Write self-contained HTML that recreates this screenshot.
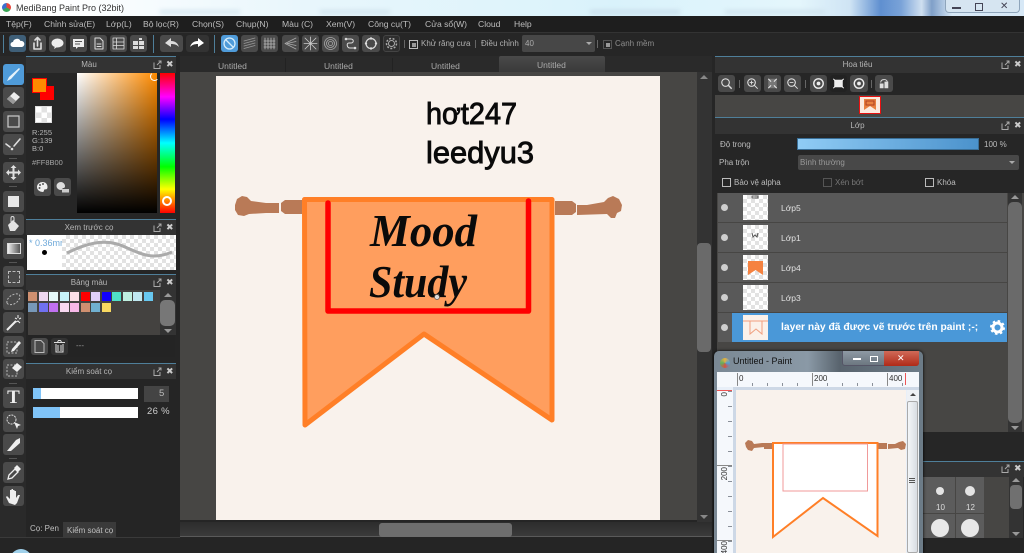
<!DOCTYPE html>
<html><head><meta charset="utf-8"><title>MediBang Paint Pro</title>
<style>
html,body{margin:0;padding:0;background:#252525}
#r{position:relative;width:1024px;height:553px;overflow:hidden;background:#252525;font-family:"Liberation Sans","DejaVu Sans",sans-serif;font-size:8px;color:#c4c4c4}
#r div,#r span,#r svg{position:absolute}
.t{white-space:nowrap;line-height:12px}
.m{top:18px;font-size:8.6px;color:#bdbdbd}
.b{background:#4a4a4a;border-radius:3px}
.b svg{left:0;top:0;width:100%;height:100%}
.h{background:#333;border-top:1px solid #4f7f9a;box-sizing:border-box;text-align:center;line-height:15px;color:#b5b5b5;font-size:8px;padding-right:24px}
.ck{background:repeating-conic-gradient(#e2e2e2 0 25%,#fff 0 50%) 0 0/8px 8px}
.sw{top:292px;width:9px;height:9px}
.sx{top:303px;width:9px;height:9px}
.l{left:718px;width:289px;height:29px;background:#595959}
.th{left:743px;width:25px;height:25px}
.dot{left:721px;width:7px;height:7px;border-radius:50%;background:#cfcfcf}
.ln{left:781px;color:#e0e0e0;font-size:8.5px}
.cb{width:7px;height:7px;border:1px solid #bbb}
.ic{fill:none;stroke:#ddd;stroke-width:1.6;stroke-linecap:round;stroke-linejoin:round}
.pop{width:9px;height:9px}
.x{font-weight:bold;color:#ccc;font-size:9px}
</style></head><body><div id="r">

<!-- title bar -->
<div style="left:0;top:0;width:1024px;height:16px;background:linear-gradient(90deg,#fdfdfd 0,#fff 5%,#e8f6fc 30%,#dff4fb 50%,#d9f2fb 60%,#e4f6fc 78%,#cfe4f4 83%,#5f8fd0 86%,#7aa3d8 88%,#cfdff0 90%,#7f9fc8 91%,#d7e8f6 93%,#d7e8f6 100%)"></div>
<div style="left:160px;top:10px;width:80px;height:4px;background:#d6e8f1;filter:blur(2px)"></div>
<div style="left:320px;top:10px;width:70px;height:4px;background:#d2e5ef;filter:blur(2px)"></div>
<div style="left:590px;top:10px;width:90px;height:4px;background:#c9deeb;filter:blur(2px)"></div>
<div style="left:725px;top:10px;width:100px;height:4px;background:#cfe3ee;filter:blur(2px)"></div>
<div style="left:2px;top:3px;width:9px;height:9px;border-radius:50%;background:conic-gradient(#e8443a 0 33%,#3aa655 0 66%,#3a6fd0 0)"></div>
<div class="t" style="left:16px;top:2px;font-size:9px;color:#333">MediBang Paint Pro (32bit)</div>
<div style="left:945px;top:0;width:75px;height:13px;background:#d6e5f1;border:1px solid #8fa5bb;border-top:0;border-radius:0 0 4px 4px;box-sizing:border-box"></div>
<div style="left:952px;top:7px;width:9px;height:2px;background:#445"></div>
<div style="left:975px;top:3px;width:6px;height:6px;border:1px solid #445"></div>
<div class="t" style="left:1000px;top:1px;color:#445;font-size:10px;font-weight:bold">✕</div>

<!-- menu -->
<div style="left:0;top:16px;width:1024px;height:16px;background:#1e1e1e"></div>
<div class="t m" style="left:6px">Tệp(F)</div>
<div class="t m" style="left:44px">Chỉnh sửa(E)</div>
<div class="t m" style="left:106px">Lớp(L)</div>
<div class="t m" style="left:143px">Bộ lọc(R)</div>
<div class="t m" style="left:192px">Chọn(S)</div>
<div class="t m" style="left:236px">Chụp(N)</div>
<div class="t m" style="left:282px">Màu (C)</div>
<div class="t m" style="left:326px">Xem(V)</div>
<div class="t m" style="left:368px">Công cụ(T)</div>
<div class="t m" style="left:425px">Cửa sổ(W)</div>
<div class="t m" style="left:478px">Cloud</div>
<div class="t m" style="left:514px">Help</div>

<!-- toolbar -->
<div style="left:0;top:32px;width:1024px;height:24px;background:#262626;border-top:1px solid #333;box-sizing:border-box"></div>
<div style="left:3px;top:35px;width:1px;height:18px;background:#4f7f9a"></div>
<div style="left:153px;top:35px;width:1px;height:18px;background:#4f7f9a"></div>
<div style="left:214px;top:35px;width:1px;height:18px;background:#4f7f9a"></div>
<div class="b" style="left:9px;top:35px;width:17px;height:17px;background:#3f5f78"><svg viewBox="0 0 17 17"><path d="M4 12a2.500 2.500 0 0 1 0-5 4 4 0 0 1 7.500-1A3 3 0 0 1 13 12z" fill="#fff"/></svg></div>
<div class="b" style="left:29px;top:35px;width:17px;height:17px"><svg viewBox="0 0 17 17"><path class="ic" stroke-width="1.200" d="M5 8v6h7V8M8.500 11V3M6 5l2.500-2.500L11 5"/></svg></div>
<div class="b" style="left:49px;top:35px;width:17px;height:17px"><svg viewBox="0 0 17 17"><ellipse cx="8.500" cy="8" rx="6" ry="4.500" fill="#eee"/><path d="M6 11l-1 3 4-2.500z" fill="#eee"/></svg></div>
<div class="b" style="left:70px;top:35px;width:17px;height:17px"><svg viewBox="0 0 17 17"><path d="M3 4h11v8H8l-2 2v-2H3z" fill="#eee"/><path d="M5 6.500h7M5 9h5" stroke="#555"/></svg></div>
<div class="b" style="left:90px;top:35px;width:17px;height:17px"><svg viewBox="0 0 17 17"><path class="ic" style="stroke-width:1" d="M5 3h5l3 3v8H5zM7 9h4M7 11.500h4"/></svg></div>
<div class="b" style="left:110px;top:35px;width:17px;height:17px"><svg viewBox="0 0 17 17"><path class="ic" style="stroke-width:.8" d="M3 3h11v11H3zM3 7h11M3 10.500h11M6.500 3v11"/></svg></div>
<div class="b" style="left:130px;top:35px;width:17px;height:17px"><svg viewBox="0 0 17 17"><path d="M3 6h5v4H3zM9 6h5v4H9zM3 11h5v3H3zM9 11h5v3H9zM9 3h3v2H9z" fill="#ddd"/></svg></div>
<div class="b" style="left:160px;top:35px;width:23px;height:17px"><svg viewBox="0 0 23 17"><path d="M5 8l6-5v3c5 0 7 3 8 6-2-2-4-3-8-3v3z" fill="#ddd"/></svg></div>
<div class="b" style="left:186px;top:35px;width:23px;height:17px;background:#333"><svg viewBox="0 0 23 17"><path d="M18 8l-6-5v3c-5 0-7 3-8 6 2-2 4-3 8-3v3z" fill="#fff"/></svg></div>
<div class="b" style="left:221px;top:35px;width:17px;height:17px;background:#4f9bd9"><svg viewBox="0 0 17 17"><circle cx="8.500" cy="8.500" r="5.500" fill="none" stroke="#d5ecfa" stroke-width="1.300"/><path d="M5 5l7 7" stroke="#d5ecfa" stroke-width="1.300"/></svg></div>
<div class="b" style="left:241px;top:35px;width:17px;height:17px"><svg viewBox="0 0 17 17"><path class="ic" style="stroke:#999;stroke-width:.8" d="M3 6l11-3M3 8.500l11-3M3 11l11-3M3 13.500l11-3"/></svg></div>
<div class="b" style="left:261px;top:35px;width:17px;height:17px"><svg viewBox="0 0 17 17"><path class="ic" style="stroke:#bbb;stroke-width:.8" d="M4 3v11M7 3v11M10 3v11M13 3v11M3 6h11M3 9h11M3 12h11"/></svg></div>
<div class="b" style="left:282px;top:35px;width:17px;height:17px"><svg viewBox="0 0 17 17"><path class="ic" style="stroke:#aaa;stroke-width:.8" d="M14 3L3 8.500 14 14M14 6.500L5 8.500l9 2"/></svg></div>
<div class="b" style="left:302px;top:35px;width:17px;height:17px"><svg viewBox="0 0 17 17"><path class="ic" style="stroke:#ccc;stroke-width:.8" d="M3 3l11 11M14 3L3 14M8.500 2v13M2 8.500h13"/></svg></div>
<div class="b" style="left:322px;top:35px;width:17px;height:17px"><svg viewBox="0 0 17 17"><g fill="none" stroke="#aaa" stroke-width=".8"><circle cx="8.500" cy="8.500" r="6"/><circle cx="8.500" cy="8.500" r="4"/><circle cx="8.500" cy="8.500" r="2"/></g></svg></div>
<div class="b" style="left:342px;top:35px;width:17px;height:17px"><svg viewBox="0 0 17 17"><path class="ic" style="stroke-width:1" d="M4 4h5c3 0 3 4 0 4H7c-3 0-2 5 1 5h5"/><circle cx="4" cy="4" r="1.300" fill="#ddd"/><circle cx="13" cy="13" r="1.300" fill="#ddd"/></svg></div>
<div class="b" style="left:362px;top:35px;width:18px;height:17px"><svg viewBox="0 0 18 17"><circle cx="9" cy="8.500" r="5" fill="none" stroke="#ddd" stroke-width="1.200"/><g fill="#ddd"><circle cx="9" cy="3.500" r="1.200"/><circle cx="9" cy="13.500" r="1.200"/><circle cx="4" cy="8.500" r="1.200"/><circle cx="14" cy="8.500" r="1.200"/></g></svg></div>
<div class="b" style="left:383px;top:35px;width:17px;height:17px;background:#2e2e2e;border:1px solid #444;box-sizing:border-box"><svg viewBox="0 0 15 15"><circle cx="7.500" cy="7.500" r="3" fill="none" stroke="#aaa"/><circle cx="7.500" cy="7.500" r="5" fill="none" stroke="#aaa" stroke-width="1.500" stroke-dasharray="2 1.500"/></svg></div>
<div style="left:404px;top:40px;width:1px;height:8px;background:#666"></div>
<div class="cb" style="left:409px;top:40px;background:linear-gradient(#999,#999) center/4px 4px no-repeat"></div>
<div class="t" style="left:421px;top:38px;color:#b0b0b0">Khử răng cưa</div>
<div style="left:475px;top:40px;width:1px;height:8px;background:#666"></div>
<div class="t" style="left:481px;top:38px;color:#b0b0b0">Điều chỉnh</div>
<div style="left:522px;top:35px;width:73px;height:17px;background:#474747;border-radius:2px"></div>
<div class="t" style="left:525px;top:38px;color:#aaa;font-size:8px">40</div>
<div style="left:586px;top:42px;width:0;height:0;border:3px solid transparent;border-top-color:#aaa"></div>
<div style="left:597px;top:40px;width:1px;height:8px;background:#666"></div>
<div class="cb" style="left:603px;top:40px;border-color:#555;background:linear-gradient(#999,#999) center/4px 4px no-repeat"></div>
<div class="t" style="left:615px;top:38px;color:#8d8d8d">Cạnh mềm</div>

<!-- left tools -->
<div style="left:0;top:56px;width:26px;height:481px;background:#2a2a2a"></div>
<div class="b" style="left:3px;top:64px;width:21px;height:21px;background:#4f9bd9"><svg viewBox="0 0 21 21"><path d="M4 17l2-4L16 4l1 1-9 10z" fill="#e6f3fb"/></svg></div>
<div class="b" style="left:3px;top:87px;width:21px;height:21px"><svg viewBox="0 0 21 21"><path d="M4 12l7-7 6 5-7 7z" fill="#eee"/><path d="M4 12l3-3 6 5-3 3z" fill="#999"/></svg></div>
<div class="b" style="left:3px;top:111px;width:21px;height:21px"><svg viewBox="0 0 21 21"><rect x="5" y="5" width="11" height="11" fill="none" stroke="#ccc" stroke-width="1.200"/></svg></div>
<div class="b" style="left:3px;top:134px;width:21px;height:21px"><svg viewBox="0 0 21 21"><path class="ic" d="M3 10l4 3M11 12l6-7"/><circle cx="9" cy="15" r="1.300" fill="#ddd"/></svg></div>
<div style="left:9px;top:158px;width:8px;height:1px;background:#555"></div>
<div class="b" style="left:3px;top:162px;width:21px;height:21px"><svg viewBox="0 0 21 21"><path d="M10.500 3l3 3h-2v3.500H15v-2l3 3-3 3v-2h-3.500V15h2l-3 3-3-3h2v-3.500H6v2l-3-3 3-3v2h3.500V6h-2z" fill="#e0e0e0"/></svg></div>
<div style="left:9px;top:186px;width:8px;height:1px;background:#555"></div>
<div class="b" style="left:3px;top:191px;width:21px;height:21px"><div style="left:5px;top:5px;width:11px;height:11px;background:#e8e8e8"></div></div>
<div class="b" style="left:3px;top:214px;width:21px;height:21px"><svg viewBox="0 0 21 21"><path d="M5 11l5-5 6 6-4 5H7z" fill="#e4e4e4"/><path d="M8 8V4a1.500 1.500 0 0 1 3 0v3" fill="none" stroke="#ddd"/></svg></div>
<div class="b" style="left:3px;top:238px;width:21px;height:21px"><div style="left:4px;top:5px;width:14px;height:11px;background:linear-gradient(90deg,#eee,#555);border:1px solid #ddd;box-sizing:border-box"></div></div>
<div style="left:9px;top:262px;width:8px;height:1px;background:#555"></div>
<div class="b" style="left:3px;top:266px;width:21px;height:21px"><div style="left:5px;top:5px;width:10px;height:10px;border:1px dashed #bbb"></div></div>
<div class="b" style="left:3px;top:289px;width:21px;height:21px"><svg viewBox="0 0 21 21"><path d="M4 14c-1-5 6-10 11-9 4 1 1 8-4 10-3 1-6 1-7-1z" fill="none" stroke="#bbb" stroke-dasharray="2 1.500"/></svg></div>
<div class="b" style="left:3px;top:312px;width:21px;height:21px"><svg viewBox="0 0 21 21"><path d="M4 18L13 9" stroke="#eee" stroke-width="2"/><path d="M15 3v3M12 6l2 1M18 6l-2 1M13 10l2-1 2 2" stroke="#eee" fill="none"/></svg></div>
<div class="b" style="left:3px;top:336px;width:21px;height:21px"><svg viewBox="0 0 21 21"><rect x="4" y="6" width="10" height="11" fill="none" stroke="#bbb" stroke-dasharray="2 1.500"/><path d="M9 13l7-8 2 2-7 8-3 1z" fill="#eee"/></svg></div>
<div class="b" style="left:3px;top:359px;width:21px;height:20px"><svg viewBox="0 0 21 20"><rect x="4" y="6" width="10" height="11" fill="none" stroke="#bbb" stroke-dasharray="2 1.500"/><path d="M9 9l5-5 5 4-5 5z" fill="#eee"/></svg></div>
<div style="left:9px;top:383px;width:8px;height:1px;background:#555"></div>
<div class="b t" style="left:3px;top:387px;width:21px;height:21px;text-align:center;font:bold 19px/21px 'Liberation Serif',serif;color:#eee">T</div>
<div class="b" style="left:3px;top:411px;width:21px;height:21px"><svg viewBox="0 0 21 21"><circle cx="8.500" cy="8.500" r="4.500" fill="none" stroke="#ddd" stroke-dasharray="2 1"/><path d="M11 11l7 3-3 1-1 3z" fill="#eee"/></svg></div>
<div class="b" style="left:3px;top:434px;width:21px;height:21px"><svg viewBox="0 0 21 21"><path d="M4 17l9-11 4-2 0 5-9 8z" fill="#eee"/></svg></div>
<div style="left:9px;top:458px;width:8px;height:1px;background:#555"></div>
<div class="b" style="left:3px;top:462px;width:21px;height:21px"><svg viewBox="0 0 21 21"><path d="M5 17l1-4 6-6 3 3-6 6z" fill="none" stroke="#eee" stroke-width="1.300"/><path d="M11 6l3-3 4 4-3 3z" fill="#eee"/></svg></div>
<div class="b" style="left:3px;top:486px;width:21px;height:20px"><svg viewBox="0 0 21 20"><path d="M6 17l-3-6 1-1 3 3V4h1.500v6-7H10v7-6h1.500v6-5H13v7l2-3h2l-3 8-2 2z" fill="#eee"/></svg></div>

<!-- colour panel -->
<div style="left:26px;top:56px;width:150px;height:163px;background:#262626"></div>
<div class="h" style="left:26px;top:56px;width:150px;height:17px">Màu</div>
<svg class="pop" style="left:153px;top:60px"><path d="M1 2.500v6h6V5M4 5l4-4M5.500 1H8v2.500" fill="none" stroke="#aaa"/></svg><div class="t x" style="left:166px;top:58px">✖</div>
<div style="left:40px;top:86px;width:14px;height:14px;background:#f00"></div>
<div style="left:32px;top:78px;width:15px;height:15px;background:#ff8b00;border:1px solid #f00;box-sizing:border-box"></div>
<div class="ck" style="left:35px;top:106px;width:17px;height:17px;background-size:11px 11px;border:1px solid #ddd;box-sizing:border-box"></div>
<div class="t" style="left:32px;top:129px;font-size:7.500px;line-height:8px;color:#b5b5b5;white-space:pre">R:255
G:139
B:0</div>
<div class="t" style="left:32px;top:157px;font-size:7.500px;color:#a5a5a5">#FF8B00</div>
<div class="b" style="left:34px;top:178px;width:17px;height:18px"><svg viewBox="0 0 17 18"><path d="M8.500 4a5.500 5 0 1 0 0 10c2 0 1-2 2-2.500s3 .5 3-2.500c0-3-2-5-5-5z" fill="#eee"/><g fill="#555"><circle cx="6" cy="7" r="1"/><circle cx="9" cy="6" r="1"/><circle cx="5.500" cy="10" r="1"/></g></svg></div>
<div class="b" style="left:54px;top:178px;width:17px;height:18px"><svg viewBox="0 0 17 18"><path d="M7 4a4.500 4 0 1 0 0 8c2 0 1-2 2-2s2 0 2-2c0-2-2-4-4-4z" fill="#ddd"/><rect x="8" y="11" width="7" height="3.500" fill="#ccc"/></svg></div>
<div style="left:77px;top:73px;width:80px;height:140px;background:linear-gradient(#0000,#000),linear-gradient(90deg,#fff,#ff8b00)"></div>
<div style="left:150px;top:72px;width:7px;height:7px;border:1.500px solid #fff;border-radius:50%;border-top-color:transparent;border-right-color:transparent"></div>
<div style="left:160px;top:73px;width:15px;height:140px;background:linear-gradient(#f00 0,#f0f 17%,#00f 33%,#0ff 50%,#0f0 67%,#ff0 83%,#f00 100%)"></div>
<div style="left:162px;top:196px;width:6px;height:6px;border:2px solid #fff;border-radius:50%"></div>

<!-- preview -->
<div class="h" style="left:26px;top:219px;width:150px;height:16px;line-height:15px">Xem trước cọ</div>
<svg class="pop" style="left:153px;top:223px"><path d="M1 2.500v6h6V5M4 5l4-4M5.500 1H8v2.500" fill="none" stroke="#aaa"/></svg><div class="t x" style="left:166px;top:221px">✖</div>
<div style="left:27px;top:235px;width:35px;height:35px;background:#fff;overflow:hidden"></div>
<div class="t" style="left:29px;top:237px;font-size:9px;color:#6fa9d9;width:33px;overflow:hidden">* 0.36mm</div>
<div style="left:42px;top:250px;width:5px;height:5px;border-radius:50%;background:#000"></div>
<div class="ck" style="left:62px;top:235px;width:114px;height:35px;background-size:8px 8px"></div>
<svg style="left:62px;top:235px" width="114" height="35"><path d="M5 18C25 8 40 5 55 9S85 28 110 17" fill="none" stroke="#aaa" stroke-width="3"/></svg>

<!-- palette -->
<div class="h" style="left:26px;top:274px;width:150px;height:16px">Bảng màu</div>
<svg class="pop" style="left:153px;top:278px"><path d="M1 2.500v6h6V5M4 5l4-4M5.500 1H8v2.500" fill="none" stroke="#aaa"/></svg><div class="t x" style="left:166px;top:276px">✖</div>
<div style="left:28px;top:290px;width:132px;height:45px;background:#444240"></div>
<div class="sw" style="left:28px;background:#d09070"></div><div class="sw" style="left:39px;background:#f0d8f0"></div><div class="sw" style="left:49px;background:#e8fafa"></div><div class="sw" style="left:60px;background:#c8f4fa"></div><div class="sw" style="left:70px;background:#fde0e8"></div><div class="sw" style="left:81px;background:#f00"></div><div class="sw" style="left:91px;background:#e0d0f8"></div><div class="sw" style="left:102px;background:#10f"></div><div class="sw" style="left:112px;background:#50e0c8"></div><div class="sw" style="left:123px;background:#c0f0e0"></div><div class="sw" style="left:133px;background:#c0e8f0"></div><div class="sw" style="left:144px;background:#68c8f0"></div>
<div class="sx" style="left:28px;background:#7898b8"></div><div class="sx" style="left:39px;background:#7070f0"></div><div class="sx" style="left:49px;background:#c070f0"></div><div class="sx" style="left:60px;background:#f8d8f0"></div><div class="sx" style="left:70px;background:#f8b8e8"></div><div class="sx" style="left:81px;background:#d09070"></div><div class="sx" style="left:91px;background:#70b0d0"></div><div class="sx" style="left:102px;background:#f8d860"></div>
<div style="left:160px;top:290px;width:16px;height:45px;background:#333"></div>
<div style="left:160px;top:300px;width:15px;height:26px;background:#777;border-radius:5px"></div>
<div style="left:164px;top:293px;width:0;height:0;border:4px solid transparent;border-bottom-color:#999;border-top:0"></div>
<div style="left:164px;top:329px;width:0;height:0;border:4px solid transparent;border-top-color:#999;border-bottom:0"></div>
<div style="left:28px;top:335px;width:147px;height:22px;background:#242424"></div>
<div class="b" style="left:31px;top:338px;width:17px;height:17px"><svg viewBox="0 0 17 17"><path d="M4 2.500h6l3 3v9H4z" fill="none" stroke="#bbb"/></svg></div>
<div class="b" style="left:51px;top:338px;width:17px;height:17px;background:#333"><svg viewBox="0 0 17 17"><path d="M3 4.500h11M5 6v8h7V6M7 7v6M10 7v6M6.500 4l1-1.500h2l1 1.500" fill="none" stroke="#ddd"/></svg></div>
<div class="t" style="left:76px;top:340px;color:#999">---</div>

<!-- brush control -->
<div class="h" style="left:26px;top:363px;width:150px;height:16px">Kiểm soát cọ</div>
<svg class="pop" style="left:153px;top:367px"><path d="M1 2.500v6h6V5M4 5l4-4M5.500 1H8v2.500" fill="none" stroke="#aaa"/></svg><div class="t x" style="left:166px;top:365px">✖</div>
<div style="left:33px;top:388px;width:105px;height:11px;background:linear-gradient(90deg,#80c4f8 8px,#fff 8px)"></div>
<div style="left:144px;top:386px;width:25px;height:16px;background:#444"></div>
<div class="t" style="left:159px;top:388px;color:#bbb;font-size:9.500px">5</div>
<div style="left:33px;top:407px;width:105px;height:11px;background:linear-gradient(90deg,#80c4f8 27px,#fff 27px)"></div>
<div class="t" style="left:147px;top:406px;color:#ccc;font-size:9.500px;letter-spacing:.3px">26 %</div>
<div class="t" style="left:30px;top:523px;color:#c0c0c0">Cọ: Pen</div>
<div style="left:63px;top:522px;width:53px;height:15px;background:#3a3a3a"></div>
<div class="t" style="left:67px;top:525px;color:#c0c0c0">Kiểm soát cọ</div>
<div style="left:0;top:537px;width:180px;height:1px;background:#3a3a3a"></div>
<div style="left:10px;top:549px;width:22px;height:22px;border-radius:50%;background:#9fd0ea"></div>

<!-- canvas area -->
<div style="left:180px;top:56px;width:532px;height:16px;background:#2a2a2a"></div>
<div class="t" style="left:218px;top:60px;color:#aaa;font-size:8.500px">Untitled</div>
<div class="t" style="left:324px;top:60px;color:#aaa;font-size:8.500px">Untitled</div>
<div class="t" style="left:431px;top:60px;color:#aaa;font-size:8.500px">Untitled</div>
<div style="left:285px;top:58px;width:1px;height:14px;background:#222"></div>
<div style="left:392px;top:58px;width:1px;height:14px;background:#222"></div>
<div style="left:499px;top:56px;width:106px;height:16px;background:linear-gradient(#4a4a4a,#3a3a3a);border-radius:2px 2px 0 0"></div>
<div class="t" style="left:537px;top:59px;color:#aaa;font-size:8.500px">Untitled</div>
<div style="left:180px;top:72px;width:532px;height:448px;background:#474644"></div>
<div style="left:216px;top:76px;width:444px;height:444px;background:#f9f2ec"></div>
<div style="left:697px;top:72px;width:15px;height:465px;background:#333"></div>
<div style="left:697px;top:243px;width:14px;height:109px;background:#6a6a6a;border-radius:4px"></div>
<div style="left:700px;top:75px;width:0;height:0;border:4px solid transparent;border-bottom-color:#888;border-top:0"></div>
<div style="left:700px;top:515px;width:0;height:0;border:4px solid transparent;border-top-color:#888;border-bottom:0"></div>
<div style="left:180px;top:522px;width:532px;height:15px;background:linear-gradient(#2c2c2c,#3a3a3a);border-bottom:1px solid #5a5a5a;box-sizing:border-box"></div>
<div style="left:379px;top:523px;width:133px;height:14px;background:#6e6e6e;border-radius:3px"></div>

<!-- artwork -->
<svg style="left:216px;top:76px" width="444" height="444" viewBox="216 76 444 444">
<path d="M235 205l2-6 5-3 5 1 4 4 15 2h13v10h-13l-17 1-5 2-6-1-3-5zM281 203l4-3h17v14h-17l-4-3zM555 201h17l4 3v8l-4 3h-17zM577 205h10l17-3 4-4 5-2 6 3 3 6-1 6-4 2-2 5-4 0-4-4-30 1z" fill="#b97a57"/>
<path d="M304.500 199.500H552V420L424 334 305 425z" fill="#ff9e5e" stroke="#ff7f27" stroke-width="5" stroke-linejoin="round"/>
<path d="M328 203V311H528.500V201" fill="none" stroke="#f00" stroke-width="5.500" stroke-linejoin="round" stroke-linecap="round"/>
<text x="370" y="246" font-family="Liberation Serif,serif" font-style="italic" font-weight="bold" font-size="46" textLength="107" lengthAdjust="spacingAndGlyphs" fill="#0a0a0a">Mood</text>
<text x="369" y="297" font-family="Liberation Serif,serif" font-style="italic" font-weight="bold" font-size="46" textLength="98" lengthAdjust="spacingAndGlyphs" fill="#0a0a0a">Study</text>
<circle cx="437" cy="297" r="2.500" fill="#ddd" stroke="#555" stroke-width=".7"/>
<text x="426" y="124" font-family="Liberation Sans,sans-serif" font-size="31" textLength="91" lengthAdjust="spacingAndGlyphs" fill="#0a0a0a" stroke="#0a0a0a" stroke-width=".9">hơt247</text>
<text x="426" y="163" font-family="Liberation Sans,sans-serif" font-size="31" textLength="108" lengthAdjust="spacingAndGlyphs" fill="#0a0a0a" stroke="#0a0a0a" stroke-width=".9">leedyu3</text>
</svg>

<!-- right: navigator -->
<div style="left:712px;top:56px;width:312px;height:481px;background:#262626"></div>
<div class="h" style="left:715px;top:56px;width:309px;height:17px">Hoa tiêu</div>
<svg class="pop" style="left:1001px;top:60px"><path d="M1 2.500v6h6V5M4 5l4-4M5.500 1H8v2.500" fill="none" stroke="#aaa"/></svg><div class="t x" style="left:1014px;top:58px">✖</div>
<div class="b" style="left:718px;top:75px;width:17px;height:17px"><svg viewBox="0 0 17 18"><circle cx="7.500" cy="8" r="4" fill="none" stroke="#ddd" stroke-width="1.200"/><path d="M10.500 11l3.500 3.500" stroke="#ddd" stroke-width="1.500"/></svg></div>
<div style="left:739px;top:80px;width:1px;height:8px;background:#666"></div>
<div class="b" style="left:744px;top:75px;width:17px;height:17px"><svg viewBox="0 0 17 18"><circle cx="7.500" cy="8" r="4" fill="none" stroke="#ddd" stroke-width="1.200"/><path d="M10.500 11l3.500 3.500M5.500 8h4M7.500 6v4" stroke="#ddd"/></svg></div>
<div class="b" style="left:764px;top:75px;width:17px;height:17px"><svg viewBox="0 0 17 18"><path d="M4 4h9v10H4z" fill="#777"/><path d="M4 4l3 3M13 4l-3 3M4 14l3-3M13 14l-3-3" stroke="#eee"/></svg></div>
<div class="b" style="left:784px;top:75px;width:17px;height:17px"><svg viewBox="0 0 17 18"><circle cx="7.500" cy="8" r="4" fill="none" stroke="#ddd" stroke-width="1.200"/><path d="M10.500 11l3.500 3.500M5.500 8h4" stroke="#ddd"/></svg></div>
<div style="left:805px;top:80px;width:1px;height:8px;background:#666"></div>
<div class="b" style="left:810px;top:75px;width:17px;height:17px"><svg viewBox="0 0 17 18"><circle cx="8.500" cy="9" r="5" fill="none" stroke="#eee" stroke-width="1.500"/><circle cx="8.500" cy="9" r="2" fill="#eee"/></svg></div>
<div class="b" style="left:830px;top:75px;width:17px;height:17px;background:#222"><svg viewBox="0 0 17 18"><rect x="4" y="5" width="9" height="8" fill="#eee"/><path d="M3 4l2 2M14 4l-2 2M3 14l2-2M14 14l-2-2" stroke="#fff"/></svg></div>
<div class="b" style="left:850px;top:75px;width:18px;height:17px"><svg viewBox="0 0 17 18"><circle cx="8.500" cy="9" r="5" fill="none" stroke="#eee" stroke-width="1.500"/><circle cx="8.500" cy="9" r="2" fill="#eee"/></svg></div>
<div style="left:871px;top:80px;width:1px;height:8px;background:#666"></div>
<div class="b" style="left:875px;top:75px;width:18px;height:17px"><svg viewBox="0 0 17 18"><path d="M4 9h4v5H4zM9 7h4v7H9z" fill="#ddd"/><path d="M5 8c0-4 6-4 7-1" fill="none" stroke="#ddd"/></svg></div>
<div style="left:715px;top:95px;width:309px;height:22px;background:#474644"></div>
<div style="left:859px;top:96px;width:22px;height:18px;background:#fbeadf;border:1.500px solid #e81010;box-sizing:border-box"></div>
<svg style="left:863px;top:98px" width="14" height="13"><path d="M1 1h12v11L7 8 1 12z" fill="#e88040"/><rect x="3" y="3" width="8" height="4" fill="none" stroke="#b04020"/></svg>

<!-- layers -->
<div class="h" style="left:715px;top:117px;width:309px;height:17px">Lớp</div>
<svg class="pop" style="left:1001px;top:121px"><path d="M1 2.500v6h6V5M4 5l4-4M5.500 1H8v2.500" fill="none" stroke="#aaa"/></svg><div class="t x" style="left:1014px;top:119px">✖</div>
<div class="t" style="left:720px;top:139px;color:#bbb">Độ trong</div>
<div style="left:797px;top:138px;width:182px;height:12px;background:linear-gradient(90deg,#90ccf5,#4b92cc);border:1px solid #3a6f98;box-sizing:border-box"></div>
<div class="t" style="left:984px;top:139px;color:#bbb">100 %</div>
<div class="t" style="left:719px;top:157px;color:#bbb">Pha trộn</div>
<div style="left:798px;top:155px;width:221px;height:15px;background:#484848;border-radius:2px"></div>
<div class="t" style="left:800px;top:157px;color:#999;font-size:8px">Bình thường</div>
<div style="left:1009px;top:161px;width:0;height:0;border:3px solid transparent;border-top-color:#aaa"></div>
<div class="cb" style="left:722px;top:178px"></div><div class="t" style="left:734px;top:177px;color:#bbb">Bảo vệ alpha</div>
<div class="cb" style="left:823px;top:178px;border-color:#555"></div><div class="t" style="left:835px;top:177px;color:#777">Xén bớt</div>
<div class="cb" style="left:925px;top:178px"></div><div class="t" style="left:937px;top:177px;color:#bbb">Khóa</div>
<div style="left:717px;top:193px;width:307px;height:239px;background:#474644"></div>
<div style="left:715px;top:432px;width:309px;height:29px;background:#262626"></div>

<div class="l" style="top:193px"></div><div class="dot" style="top:204px"></div><div class="ck th" style="top:195px"></div><div class="t ln" style="top:202px">Lớp5</div>
<div class="l" style="top:223px"></div><div class="dot" style="top:234px"></div><div class="ck th" style="top:225px"></div><div class="t ln" style="top:232px">Lớp1</div>
<svg style="left:751px;top:232px" width="8" height="6"><path d="M1 1l1 4 2-2 2 2 1-4" fill="none" stroke="#555"/></svg>
<svg style="left:751px;top:195px" width="8" height="4"><path d="M1 1h6v2H1z" fill="none" stroke="#555"/></svg>
<div class="l" style="top:253px"></div><div class="dot" style="top:264px"></div><div class="ck th" style="top:255px"></div><div class="t ln" style="top:262px">Lớp4</div>
<svg style="left:748px;top:261px" width="15" height="15"><path d="M0 0h15v14L7.500 9 0 14z" fill="#f58240"/></svg>
<div class="l" style="top:283px"></div><div class="dot" style="top:294px"></div><div class="ck th" style="top:285px"></div><div class="t ln" style="top:292px">Lớp3</div>
<div class="l" style="top:313px;width:14px;height:29px"></div><div class="dot" style="top:324px"></div>
<div style="left:732px;top:313px;width:275px;height:29px;background:#4a98d8"></div>
<div style="left:743px;top:315px;width:25px;height:25px;background:#fbf1ea"></div>
<svg style="left:743px;top:315px" width="25" height="25"><path d="M0 6h25M7 6v13l6-5 6 5V6" fill="none" stroke="#f0a080"/></svg>
<div class="t" style="left:781px;top:322px;font-weight:bold;color:#fff;font-size:10.300px">layer này đã được vẽ trước trên paint ;-;</div>
<svg style="left:990px;top:320px" width="15" height="15" viewBox="0 0 15 15"><circle cx="7.500" cy="7.500" r="4.500" fill="none" stroke="#fff" stroke-width="3"/><circle cx="7.500" cy="7.500" r="6.500" fill="none" stroke="#fff" stroke-width="2" stroke-dasharray="2.500 2.600"/></svg>
<div style="left:1008px;top:193px;width:14px;height:239px;background:#333"></div>
<div style="left:1008px;top:202px;width:14px;height:221px;background:#6a6a6a;border-radius:5px"></div>
<div style="left:1011px;top:195px;width:0;height:0;border:4px solid transparent;border-bottom-color:#999;border-top:0"></div>
<div style="left:1011px;top:426px;width:0;height:0;border:4px solid transparent;border-top-color:#999;border-bottom:0"></div>

<!-- brush panel -->
<div class="h" style="left:715px;top:461px;width:309px;height:16px"></div>
<svg class="pop" style="left:1001px;top:464px"><path d="M1 2.500v6h6V5M4 5l4-4M5.500 1H8v2.500" fill="none" stroke="#aaa"/></svg><div class="t x" style="left:1014px;top:462px">✖</div>
<div style="left:923px;top:477px;width:86px;height:61px;background:#474644"></div>
<div style="left:923px;top:477px;width:32px;height:36px;background:#5c5c5c"></div>
<div style="left:956px;top:477px;width:28px;height:36px;background:#5c5c5c"></div>
<div style="left:923px;top:514px;width:32px;height:24px;background:#5c5c5c"></div>
<div style="left:956px;top:514px;width:28px;height:24px;background:#5c5c5c"></div>
<div style="left:936px;top:487px;width:8px;height:8px;border-radius:50%;background:#e4e4e4"></div>
<div style="left:965px;top:486px;width:10px;height:10px;border-radius:50%;background:#e4e4e4"></div>
<div class="t" style="left:936px;top:502px;color:#ddd;font-size:8px">10</div>
<div class="t" style="left:966px;top:502px;color:#ddd;font-size:8px">12</div>
<div style="left:931px;top:519px;width:18px;height:18px;border-radius:50%;background:#e8e8e8"></div>
<div style="left:961px;top:519px;width:18px;height:18px;border-radius:50%;background:#e8e8e8"></div>
<div style="left:1009px;top:477px;width:14px;height:61px;background:#333"></div>
<div style="left:1010px;top:485px;width:12px;height:24px;background:#707070;border-radius:4px"></div>
<div style="left:1012px;top:478px;width:0;height:0;border:4px solid transparent;border-bottom-color:#999;border-top:0"></div>
<div style="left:1012px;top:532px;width:0;height:0;border:4px solid transparent;border-top-color:#999;border-bottom:0"></div>

<!-- paint window -->
<div style="left:714px;top:351px;width:209px;height:210px;background:linear-gradient(90deg,#7a8894,#8a99a6 45%,#59646e 60%,#6d7c88);border-radius:5px 5px 0 0;box-shadow:0 0 3px #000"></div>
<div style="left:720px;top:358px;width:10px;height:10px;border-radius:50%;background:conic-gradient(#e8b040,#50a0d8,#d85040,#60b060,#e8b040)"></div>
<div class="t" style="left:733px;top:355px;font-size:9px;color:#111">Untitled - Paint</div>
<div style="left:842px;top:351px;width:77px;height:15px;border-radius:0 0 3px 3px;background:linear-gradient(#8e99a4,#6c7780);border:1px solid #556;box-sizing:border-box;border-top:0"></div>
<div style="left:884px;top:351px;width:35px;height:15px;background:linear-gradient(#d06a58,#b02a18);border-radius:0 0 3px 0"></div>
<div style="left:853px;top:358px;width:8px;height:2px;background:#fff"></div>
<div style="left:870px;top:356px;width:6px;height:4px;border:1.500px solid #fff"></div>
<div class="t" style="left:897px;top:352px;font-size:9px;font-weight:bold;color:#fff">✕</div>
<!-- ruler -->
<div style="left:717px;top:372px;width:202px;height:181px;background:#e8eff8"></div>
<div style="left:717px;top:372px;width:202px;height:15px;background:#f5f8fc"></div>
<div style="left:733px;top:387px;width:186px;height:3px;background:#cdd8e6"></div>
<div style="left:717px;top:390px;width:16px;height:163px;background:#f5f8fc"></div>
<div style="left:733px;top:387px;width:3px;height:166px;background:#cdd8e6"></div>
<div style="left:737px;top:383px;width:169px;height:3px;background:repeating-linear-gradient(90deg,#8a9099 0 1px,#0000 1px 15px)"></div>
<div style="left:728px;top:391px;width:4px;height:162px;background:repeating-linear-gradient(#8a9099 0 1px,#0000 1px 15px)"></div>
<div style="left:737px;top:373px;width:1px;height:12px;background:#888"></div>
<div style="left:812px;top:373px;width:1px;height:12px;background:#888"></div>
<div style="left:887px;top:373px;width:1px;height:12px;background:#888"></div>
<div style="left:905px;top:373px;width:1px;height:12px;background:#e55"></div>
<div style="left:717px;top:390px;width:15px;height:1px;background:#e55"></div>
<div style="left:717px;top:465px;width:15px;height:1px;background:#888"></div>
<div style="left:717px;top:540px;width:15px;height:1px;background:#888"></div>
<div class="t" style="left:739px;top:373px;font-size:8px;color:#333">0</div>
<div class="t" style="left:814px;top:373px;font-size:8px;color:#333">200</div>
<div class="t" style="left:889px;top:373px;font-size:8px;color:#333">400</div>
<div class="t" style="left:719px;top:392px;font-size:8px;color:#333;writing-mode:vertical-rl;transform:rotate(180deg)">0</div>
<div class="t" style="left:719px;top:467px;font-size:8px;color:#333;writing-mode:vertical-rl;transform:rotate(180deg)">200</div>
<div class="t" style="left:719px;top:541px;font-size:8px;color:#333;writing-mode:vertical-rl;transform:rotate(180deg)">400</div>
<div style="left:736px;top:390px;width:170px;height:163px;background:#f9f2ec"></div>
<svg style="left:736px;top:390px" width="170" height="163" viewBox="736 390 170 163">
<path d="M745 443l3-3 4 1 2 3 8-1 3 0v4l-11 1-2 3-4-1-2-3zM764 443h9v6h-9zM878 443h9v6h-9zM888 444h7l4-2 4-1 3 3-1 5-4 1-3-2-10 1z" fill="#b97a57"/>
<path d="M773 443H877.500V536L823 498 773 537z" fill="#fff" stroke="#ff7f27" stroke-width="2"/>
<rect x="783" y="444" width="84.500" height="47" fill="none" stroke="#f09a9a" stroke-width="1"/>
</svg>
<div style="left:907px;top:390px;width:12px;height:163px;background:#eef1f5"></div>
<div style="left:907px;top:401px;width:11px;height:152px;background:linear-gradient(90deg,#f4f6f8,#d8dde3);border:1px solid #aaa;box-sizing:border-box;border-radius:2px"></div>
<div style="left:909px;top:478px;width:6px;height:5px;background:repeating-linear-gradient(#555 0 1px,#0000 1px 2px)"></div>
<div style="left:910px;top:393px;width:0;height:0;border:3px solid transparent;border-bottom-color:#444;border-top:0"></div>
</div></body></html>
